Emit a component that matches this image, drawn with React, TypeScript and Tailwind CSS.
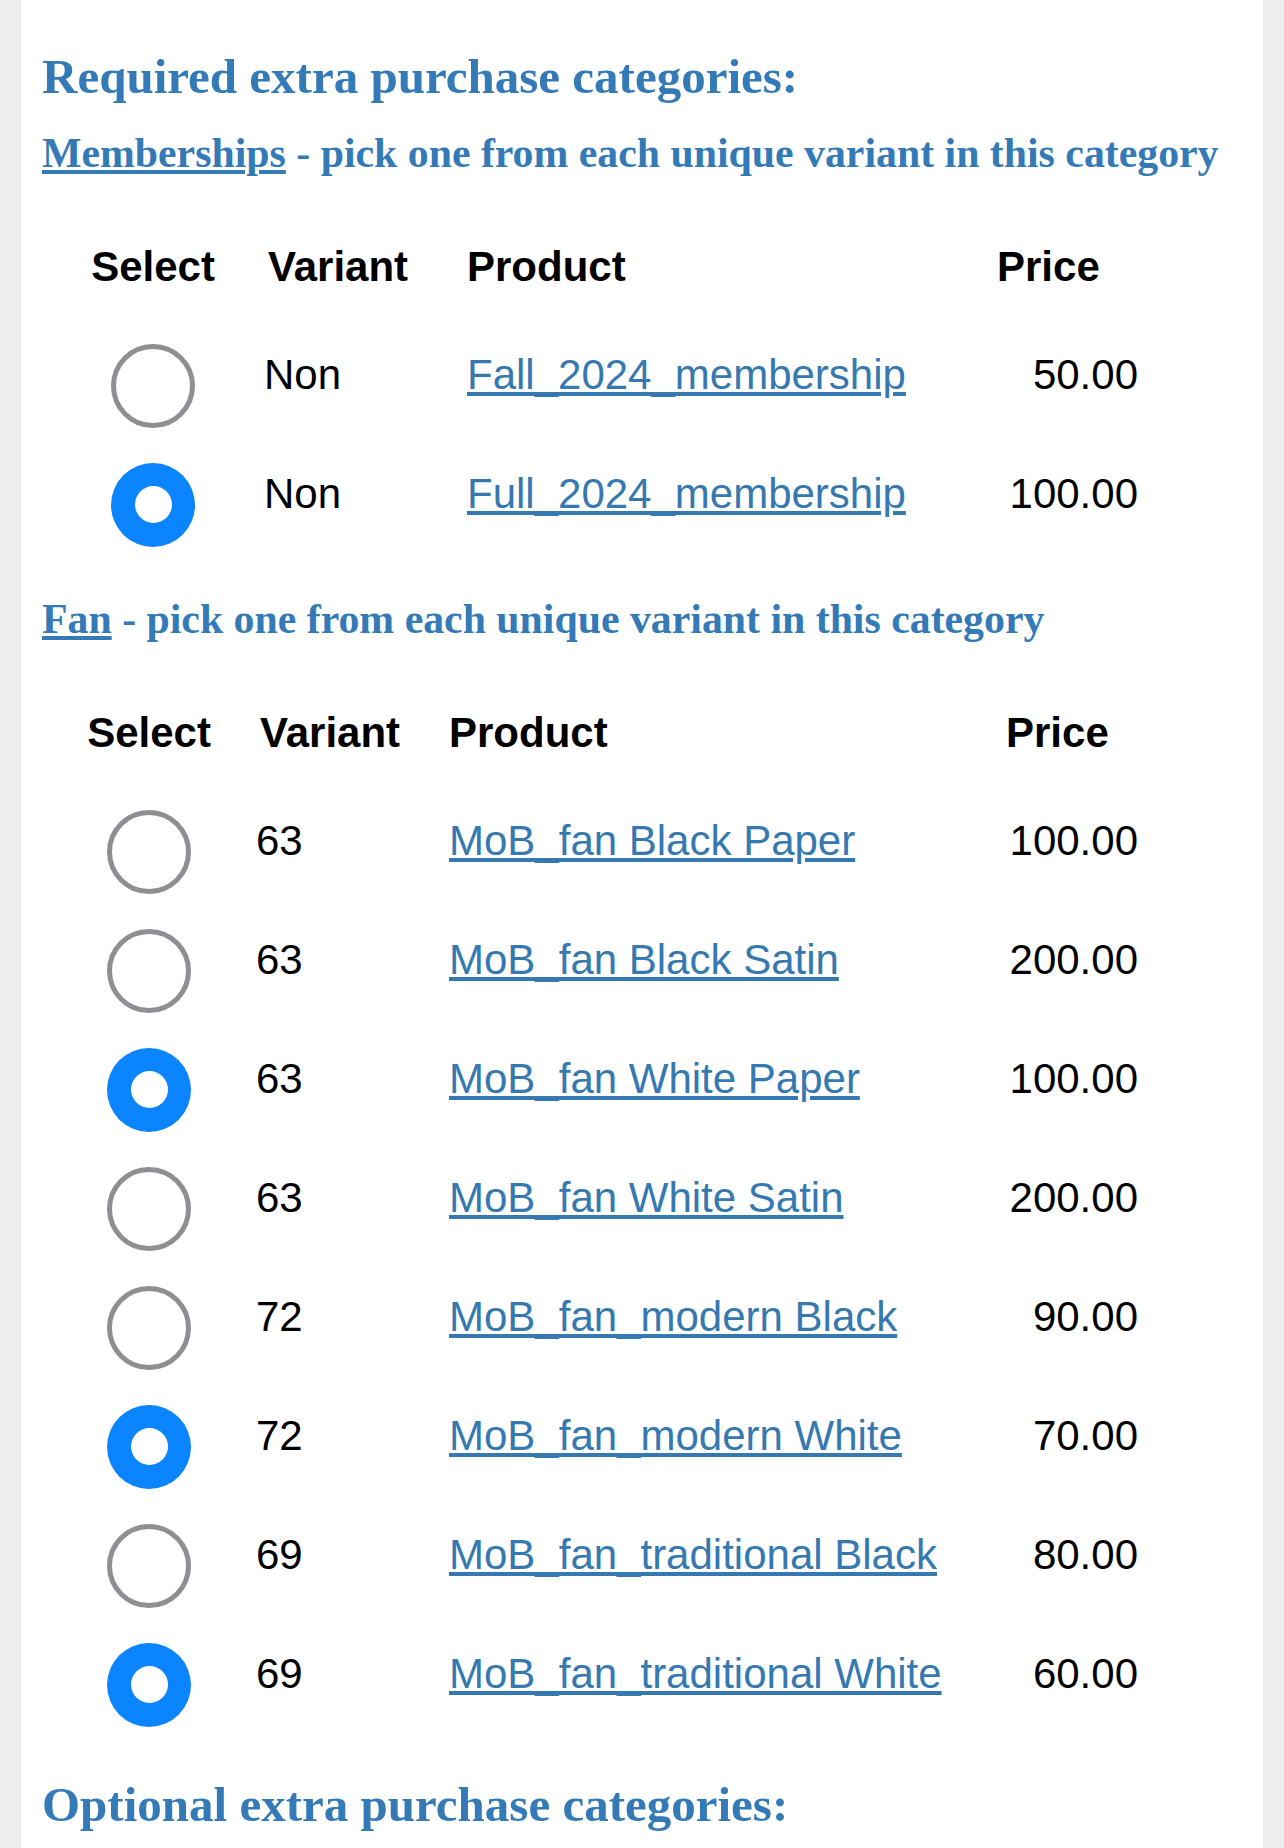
import { useState } from "react";

type Item = { variant: string; product: string; price: string };

type Category = {
  name: string;
  cols: string;
  items: Item[];
  initial: number[];
};

const categories: Category[] = [
  {
    name: "Memberships",
    cols: "grid-cols-[222px_203px_530px_141px]",
    items: [
      { variant: "Non", product: "Fall_2024_membership", price: "50.00" },
      { variant: "Non", product: "Full_2024_membership", price: "100.00" },
    ],
    initial: [1],
  },
  {
    name: "Fan",
    cols: "grid-cols-[214px_193px_557px_132px]",
    items: [
      { variant: "63", product: "MoB_fan Black Paper", price: "100.00" },
      { variant: "63", product: "MoB_fan Black Satin", price: "200.00" },
      { variant: "63", product: "MoB_fan White Paper", price: "100.00" },
      { variant: "63", product: "MoB_fan White Satin", price: "200.00" },
      { variant: "72", product: "MoB_fan_modern Black", price: "90.00" },
      { variant: "72", product: "MoB_fan_modern White", price: "70.00" },
      { variant: "69", product: "MoB_fan_traditional Black", price: "80.00" },
      { variant: "69", product: "MoB_fan_traditional White", price: "60.00" },
    ],
    initial: [2, 5, 7],
  },
];

function Radio({ checked, onClick }: { checked: boolean; onClick: () => void }) {
  return (
    <button
      onClick={onClick}
      className={`h-[84px] w-[84px] rounded-full flex items-center justify-center ${
        checked ? "bg-[#0a84ff]" : "border-[5px] border-[#8e8e93] bg-white"
      }`}
    >
      {checked && <span className="h-[37px] w-[37px] rounded-full bg-white" />}
    </button>
  );
}

function CategoryTable({ cat }: { cat: Category }) {
  const [selected, setSelected] = useState<number[]>(cat.initial);

  // one pick per variant: picking a row clears the others with the same variant
  const pick = (i: number) => {
    const variant = cat.items[i].variant;
    setSelected((prev) => [
      ...prev.filter((j) => cat.items[j].variant !== variant),
      i,
    ]);
  };

  return (
    <div className="mt-[33px]">
      <div className={`grid ${cat.cols} h-[119px] items-center font-bold pt-[1px]`}>
        <div className="text-center">Select</div>
        <div className="pl-[4px]">Variant</div>
        <div>Product</div>
        <div>Price</div>
      </div>
      {cat.items.map((item, i) => (
        <div key={i} className={`grid ${cat.cols} h-[119px] items-center`}>
          <div className="flex justify-center">
            <Radio checked={selected.includes(i)} onClick={() => pick(i)} />
          </div>
          <div className="pb-[21px]">{item.variant}</div>
          <div className="pb-[21px]">
            <a href="#" className="text-[#3579b0] underline">
              {item.product}
            </a>
          </div>
          <div className="pb-[21px] text-right">{item.price}</div>
        </div>
      ))}
    </div>
  );
}

export default function App() {
  return (
    <div className="min-h-screen bg-[#ededed] px-[21px]">
      <div className="min-h-screen bg-white px-[21px] pt-[52px] font-['Liberation_Sans',Arial,sans-serif] text-[42px] leading-[42px] text-black">
        <h1 className="font-['Liberation_Serif',serif] font-bold text-[49px] leading-[49px] text-[#337ab7]">
          Required extra purchase categories:
        </h1>
        {categories.map((cat, idx) => (
          <section key={cat.name} className={idx === 0 ? "mt-[31px]" : "mt-[34px]"}>
            <h2 className="font-['Liberation_Serif',serif] font-bold text-[41.8px] leading-[42px] text-[#337ab7] whitespace-nowrap">
              <a href="#" className="underline">
                {cat.name}
              </a>{" "}
              - pick one from each unique variant in this category
            </h2>
            <CategoryTable cat={cat} />
          </section>
        ))}
        <h1 className="mt-[36px] font-['Liberation_Serif',serif] font-bold text-[49px] leading-[49px] text-[#337ab7]">
          Optional extra purchase categories:
        </h1>
      </div>
    </div>
  );
}
